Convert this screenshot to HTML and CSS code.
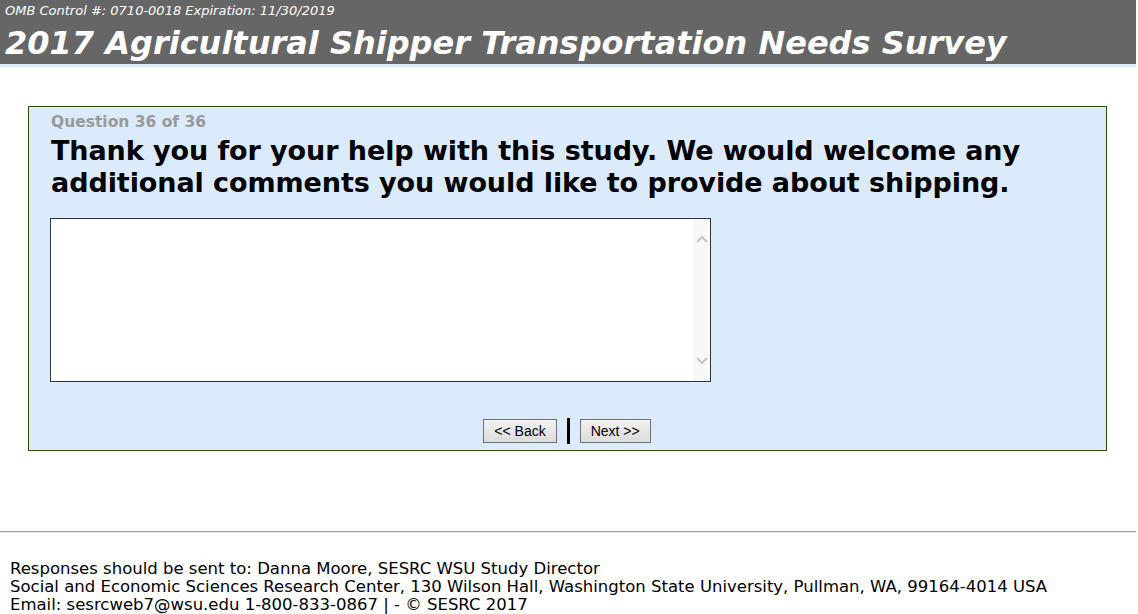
FILE: index.html
```html
<!DOCTYPE html>
<html lang="en">
  <head>
    <meta charset="UTF-8" />
    <title>2017 Agricultural Shipper Transportation Needs Survey</title>
    <link rel="stylesheet" href="styles.css">
  </head>
  <body>
    <div class="header">
      <div class="omb">OMB Control #: 0710-0018 Expiration: 11/30/2019</div>
      <h1 class="title">2017 Agricultural Shipper Transportation Needs Survey</h1>
    </div>
    <div class="content">
      <div class="question">
        <div class="qnum">Question 36 of 36</div>
        <div class="qtext">Thank you for your help with this study. We would welcome any additional comments you would like to provide about shipping.</div>
        <div class="answer">
          <div class="comments">
            <div class="scroll">
              <svg width="12" height="8" viewBox="0 0 12 8"><path d="M1 7 L6 2 L11 7" fill="none" stroke="#c4c4c4" stroke-width="2"/></svg>
              <svg width="12" height="8" viewBox="0 0 12 8"><path d="M1 1 L6 6 L11 1" fill="none" stroke="#c4c4c4" stroke-width="2"/></svg>
            </div>
          </div>
        </div>
        <div class="nav">
          <button class="btn">&lt;&lt; Back</button>
          <span class="sep"></span>
          <button class="btn">Next &gt;&gt;</button>
        </div>
      </div>
    </div>
    <div class="footer">
      <div>Responses should be sent to: Danna Moore, SESRC WSU Study Director</div>
      <div>Social and Economic Sciences Research Center, 130 Wilson Hall, Washington State University, Pullman, WA, 99164-4014 USA</div>
      <div>Email: sesrcweb7@wsu.edu 1-800-833-0867 | - &copy; SESRC 2017</div>
    </div>
  </body>
</html>
```
FILE: styles.css
```css
* {
  margin: 0;
  padding: 0;
}
body {
  width: 1136px;
  font-family: "DejaVu Sans", Verdana, sans-serif;
  background: #fff;
  color: #000;
}
.header {
  background-color: #666666;
  color: #fff;
  padding: 3px 0 0 5px;
  height: 61px;
  border-bottom: 3px solid #dbeafb;
}
.omb {
  font-size: 13px;
  font-style: italic;
  line-height: 16px;
}
.title {
  font-size: 32px;
  font-style: italic;
  font-weight: bold;
  line-height: 40px;
  margin-top: 4px;
}
.content {
  padding: 39px 29px 0 28px;
}
.question {
  background-color: #dcebfc;
  border: 1px solid #334d00;
  padding: 5px 22px 6px 21px;
  height: 332px;
}
.qnum {
  color: #999999;
  font-weight: bold;
  font-size: 15.5px;
  line-height: 20px;
  padding-left: 1px;
}
.qtext {
  font-weight: bold;
  font-size: 27px;
  line-height: 32px;
  margin-top: 3px;
  padding-left: 1px;
  letter-spacing: -0.08px;
}
.answer {
  margin-top: 19px;
}
.comments {
  width: 659px;
  height: 162px;
  background: #fff;
  border: 1px solid #333;
  display: flex;
  justify-content: flex-end;
}
.scroll {
  width: 17px;
  background: #f8f8f8;
  display: flex;
  flex-direction: column;
  justify-content: space-between;
  align-items: center;
  padding: 16px 0 16px;
}
.nav {
  margin-top: 36px;
  display: flex;
  justify-content: center;
  align-items: center;
  gap: 10px;
}
.btn {
  font-family: "Liberation Sans", Arial, sans-serif;
  font-size: 14px;
  color: #000;
  height: 24px;
  padding: 0 10px;
  border: 1px solid #707070;
  background: linear-gradient(#f2f2f2, #dcdcdc);
}
.sep {
  width: 3px;
  height: 26px;
  background: #000;
}
.footer {
  margin-top: 80px;
  border-top: 1px solid #a0a0a0;
  box-shadow: inset 0 1px 0 #e6e6e6;
  padding: 28px 10px 0;
  font-size: 16.5px;
  line-height: 18px;
}
```
